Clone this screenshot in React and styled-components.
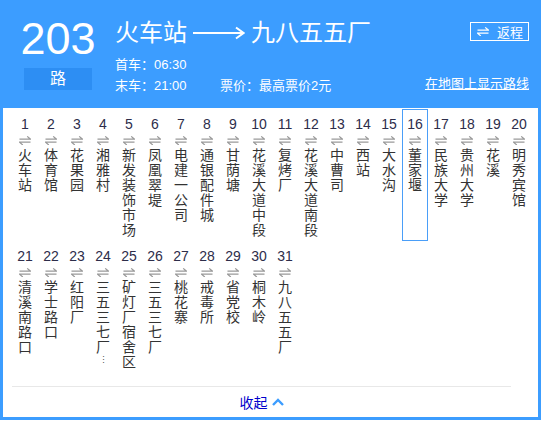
import styled, { createGlobalStyle } from 'styled-components';

const GlobalStyle = createGlobalStyle`
  body {
    margin: 0;
    background: #fff;
    font-family: "Liberation Sans", "Noto Sans CJK SC", sans-serif;
  }
`;

const Panel = styled.div`
  width: 541px;
  box-sizing: border-box;
  border: 3px solid #3c9dff;
  background: #fff;
`;

const Header = styled.div`
  display: flex;
  align-items: flex-start;
  background: #3c9dff;
  color: #fff;
  height: 105px;
  padding: 0 9px 0 17px;
`;

const LineBadge = styled.div`
  width: 76px;
  display: flex;
  flex-direction: column;
  align-items: center;
  padding-top: 13px;
`;

const LineNumber = styled.div`
  font-family: "Liberation Sans", sans-serif;
  font-size: 45px;
  line-height: 45px;
`;

const LineTag = styled.div`
  margin-top: 7px;
  width: 68px;
  height: 22px;
  background: #2d8ef3;
  font-size: 16px;
  line-height: 22px;
  text-align: center;
`;

const Main = styled.div`
  flex: 1;
  margin-left: 19px;
  padding-top: 15px;
`;

const TitleRow = styled.div`
  display: flex;
  align-items: flex-start;
  justify-content: space-between;
`;

const Title = styled.div`
  display: flex;
  align-items: center;
  gap: 6px;
  font-size: 24px;
  line-height: 30px;
`;

const ReturnButton = styled.div`
  display: flex;
  align-items: center;
  gap: 8px;
  margin-top: 4px;
  height: 19px;
  box-sizing: border-box;
  padding: 0 5px 0 6px;
  border: 1px solid #fff;
  font-size: 13px;
`;

const InfoRow = styled.div`
  display: flex;
  align-items: center;
  font-size: 13px;
  line-height: 21px;
  margin-top: ${props => props.$first ? '6px' : '0'};
`;

const InfoItem = styled.span`
  width: ${props => props.$w || 'auto'};
`;

const MapLink = styled.span`
  margin-left: auto;
  text-decoration: underline;
  position: relative;
  top: -2px;
`;

const Stations = styled.div`
  display: grid;
  grid-template-columns: repeat(20, 26px);
  padding: 1px 0 0 9px;
`;

const Station = styled.div`
  display: flex;
  flex-direction: column;
  align-items: center;
  box-sizing: border-box;
  padding: 6px 0 2px;
  border: 1px solid ${props => props.$active ? '#4a9ef8' : 'transparent'};
  color: #333;
`;

const StationNo = styled.div`
  font-size: 14px;
  line-height: 16px;
  color: #2d2d4a;
`;

const ArrowBox = styled.div`
  height: 16px;
  display: flex;
  align-items: center;
`;

const StationName = styled.div`
  width: 14px;
  font-size: 14px;
  line-height: 15px;
  word-break: break-all;
  text-align: center;
  color: #333;
`;

const Ellipsis = styled.div`
  font-size: 9px;
  line-height: 10px;
  color: #555;
  text-align: center;
`;

const Footer = styled.div`
  margin: 13px 27px 0 9px;
  border-top: 1px solid #e8e8e8;
  display: flex;
  justify-content: center;
  align-items: center;
  gap: 4px;
  height: 30px;
  font-size: 14px;
  color: #0000cc;
`;

const Swap = ({ color = '#999', w = 12 }) => (
  <svg width={w} height="9" viewBox="0 0 12 9" fill="none" stroke={color} strokeWidth="1.2">
    <path d="M0.5 3.2H11.5L8.2 0.4" />
    <path d="M11.5 6.2H0.5L3.8 9" />
  </svg>
);

const LongArrow = () => (
  <svg width="52" height="14" viewBox="0 0 52 14" fill="none" stroke="#fff" strokeWidth="2">
    <path d="M0 7H50" />
    <path d="M43 1.5L50.5 7L43 12.5" />
  </svg>
);

const Chevron = () => (
  <svg width="12" height="8" viewBox="0 0 12 8" fill="none" stroke="#3c9dff" strokeWidth="2.4">
    <path d="M1 7L6 2L11 7" />
  </svg>
);

const stations = [
  '火车站', '体育馆', '花果园', '湘雅村', '新发装饰市场', '凤凰翠堤', '电建一公司', '通银配件城',
  '甘荫塘', '花溪大道中段', '复烤厂', '花溪大道南段', '中曹司', '西站', '大水沟', '董家堰',
  '民族大学', '贵州大学', '花溪', '明秀宾馆', '清溪南路口', '学士路口', '红阳厂', '三五三七厂…',
  '矿灯厂宿舍区', '三五三七厂', '桃花寨', '戒毒所', '省党校', '桐木岭', '九八五五厂',
];

export default function App() {
  return (
    <>
      <GlobalStyle />
      <Panel>
        <Header>
          <LineBadge>
            <LineNumber>203</LineNumber>
            <LineTag>路</LineTag>
          </LineBadge>
          <Main>
            <TitleRow>
              <Title>
                <span>火车站</span>
                <LongArrow />
                <span>九八五五厂</span>
              </Title>
              <ReturnButton>
                <Swap color="#fff" />
                <span>返程</span>
              </ReturnButton>
            </TitleRow>
            <InfoRow $first>首车：06:30</InfoRow>
            <InfoRow>
              <InfoItem $w="105px">末车：21:00</InfoItem>
              <InfoItem>票价：最高票价2元</InfoItem>
              <MapLink>在地图上显示路线</MapLink>
            </InfoRow>
          </Main>
        </Header>
        <Stations>
          {stations.map((name, i) => {
            const cut = name.endsWith('…');
            return (
              <Station key={i} $active={i === 15}>
                <StationNo>{i + 1}</StationNo>
                <ArrowBox><Swap /></ArrowBox>
                <StationName>{cut ? name.slice(0, -1) : name}</StationName>
                {cut && <Ellipsis>⋮</Ellipsis>}
              </Station>
            );
          })}
        </Stations>
        <Footer>
          <span>收起</span>
          <Chevron />
        </Footer>
      </Panel>
    </>
  );
}
